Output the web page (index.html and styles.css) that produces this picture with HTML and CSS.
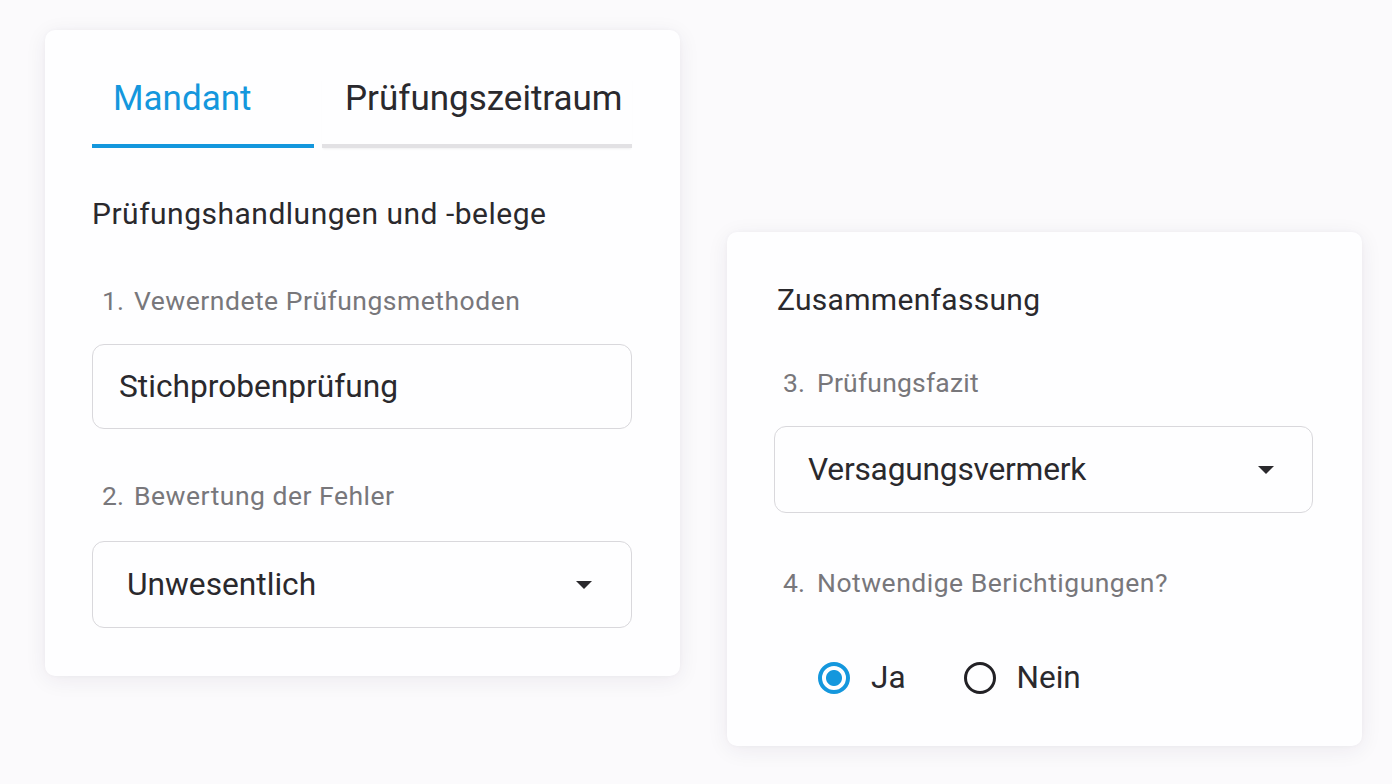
FILE: index.html
```html
<!DOCTYPE html>
<html lang="de">
<head>
<meta charset="utf-8">
<title>Prüfung</title>
<link rel="stylesheet" href="styles.css">
</head>
<body>
<div class="stage">
  <section class="card card-left">
    <nav class="tabs">
      <div class="tab tab-active tab-first">Mandant</div>
      <div class="tab tab-second">Prüfungszeitraum</div>
    </nav>
    <h2 class="heading heading-left">Prüfungshandlungen und -belege</h2>
    <div class="label label-1"><span class="num">1.</span><span>Vewerndete Prüfungsmethoden</span></div>
    <div class="field field-input">Stichprobenprüfung</div>
    <div class="label label-2"><span class="num">2.</span><span>Bewertung der Fehler</span></div>
    <div class="field field-select select-2"><span>Unwesentlich</span><span class="caret"></span></div>
  </section>

  <section class="card card-right">
    <h2 class="heading heading-right">Zusammenfassung</h2>
    <div class="label label-3"><span class="num">3.</span><span>Prüfungsfazit</span></div>
    <div class="field field-select select-3"><span>Versagungsvermerk</span><span class="caret"></span></div>
    <div class="label label-4"><span class="num">4.</span><span>Notwendige Berichtigungen?</span></div>
    <div class="radios">
      <div class="radio-item"><span class="radio radio-on"></span><span>Ja</span></div>
      <div class="radio-item"><span class="radio radio-off"></span><span>Nein</span></div>
    </div>
  </section>
</div>
</body>
</html>
```
FILE: styles.css
```css
* { box-sizing: border-box; }
html, body { margin: 0; padding: 0; }
body {
  width: 1392px;
  height: 784px;
  overflow: hidden;
  background: #fbfafc;
  font-family: Roboto, "Liberation Sans", Arial, sans-serif;
  color: #2a292d;
}
.stage {
  display: flex;
  align-items: flex-start;
  gap: 47px;
  padding: 30px 0 0 45px;
}
.card {
  background: #fefeff;
  border-radius: 10px;
  box-shadow: 0 4px 22px rgba(40, 30, 70, 0.07), 0 0 4px rgba(40, 30, 70, 0.03);
}
.card-left {
  width: 635px;
  height: 646px;
  padding: 0 48px 0 47px;
}
.card-right {
  width: 635px;
  height: 514px;
  margin-top: 202px;
  padding: 0 48px 0 48px;
}
.tabs {
  display: flex;
  gap: 8px;
  padding-top: 47px;
}
.tab {
  font-size: 35px;
  line-height: 44px;
  padding: 0 0 23px 21px;
  border-bottom: 4px solid #e2e1e4;
  color: #2a292d;
}
.tab-first { width: 222px; }
.tab-second { width: 310px; padding-left: 23px; box-shadow: 0 2px 2px -1px rgba(0,0,0,0.06); }
.tab-active {
  color: #1497dd;
  border-bottom-color: #1497dd;
}
.heading {
  margin: 0;
  font-weight: 400;
  font-size: 30px;
  line-height: 36px;
  letter-spacing: 0.5px;
  color: #2a292d;
}
.heading-left { margin-top: 48px; }
.heading-right { margin-top: 50px; margin-left: 2px; letter-spacing: 0.3px; }
.label {
  display: flex;
  font-size: 26.5px;
  line-height: 30px;
  letter-spacing: 0.5px;
  color: #78777b;
  padding-left: 10px;
}
.label .num { width: 32px; flex: none; letter-spacing: 0; }
.label-1 { margin-top: 54px; }
.label-2 { margin-top: 52px; }
.card-right .label { padding-left: 8px; }
.card-right .label .num { width: 34px; }
.label-3 { margin-top: 50px; letter-spacing: 0.2px; }
.label-4 { margin-top: 55px; }
.field {
  display: flex;
  align-items: center;
  justify-content: space-between;
  border: 1px solid #d9d8dc;
  border-radius: 12px;
  background: #fefeff;
  font-size: 31.7px;
  color: #2a292d;
}
.field-input {
  margin-top: 28px;
  height: 85px;
  padding-left: 26px;
}
.select-2 {
  margin-top: 30px;
  height: 87px;
  padding: 0 39px 0 34px;
}
.select-3 {
  margin-top: 28px;
  height: 87px;
  margin-left: -1px;
  width: 539px;
  padding: 0 38px 0 33px;
  letter-spacing: -0.2px;
}
.caret {
  width: 0;
  height: 0;
  border-left: 8px solid transparent;
  border-right: 8px solid transparent;
  border-top: 8px solid #2a292d;
}
.radios {
  display: flex;
  align-items: center;
  gap: 58px;
  margin-top: 61px;
  padding-left: 43px;
  font-size: 31.5px;
  color: #2a292d;
}
.radio-item {
  display: flex;
  align-items: center;
  gap: 21px;
}
.radio {
  width: 32px;
  height: 32px;
  border-radius: 50%;
  flex: none;
}
.radio-on {
  border: 4.5px solid #1497dd;
  background: radial-gradient(circle, #1497dd 0 7.5px, #fefeff 8.5px);
}
.radio-off {
  border: 3px solid #222125;
}
```
